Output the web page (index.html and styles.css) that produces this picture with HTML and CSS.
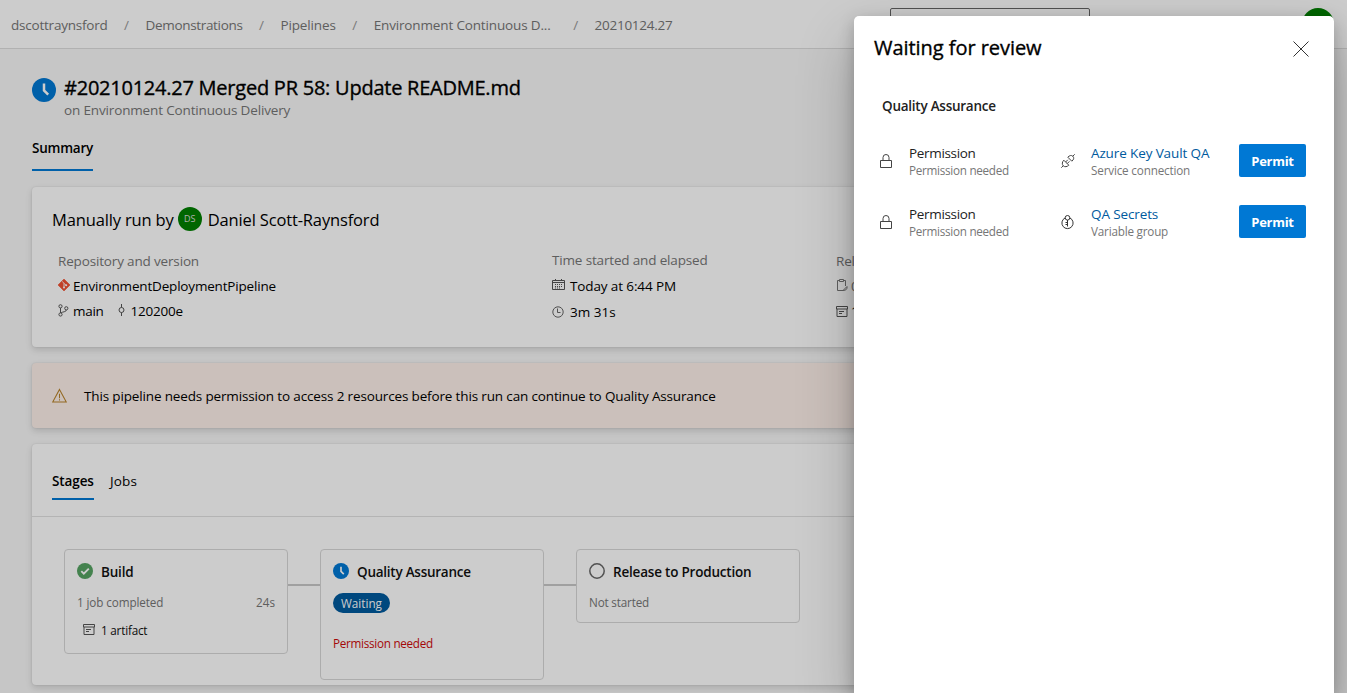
FILE: index.html
```
<!DOCTYPE html>
<html lang="en">
<head>
<meta charset="utf-8">
<title>Waiting for review</title>
<link rel="stylesheet" href="styles.css">
</head>
<body>
<svg width="0" height="0" class="defs">
  <symbol id="archive" viewBox="0 0 12 11"><path d="M.5.5h11v2.500H.5zM1 3v7.500h10V3M3 5.500h5M3 7.500h3" fill="none" stroke="currentColor"/></symbol>
  <symbol id="clock" viewBox="0 0 24 24"><circle cx="12" cy="12" r="12" fill="#0078d4"/><path d="M12 5.500v7l4.200 4.200" fill="none" stroke="#fff" stroke-width="2.500"/></symbol>
  <symbol id="lock" viewBox="0 0 12 15"><path d="M.5 6.500h11v7H.5zM3 6.500V3.500a3 3 0 0 1 6 0v3" fill="none" stroke="currentColor"/></symbol>
</svg>
<div class="page">
  <header class="topbar">
    <nav class="crumbs">
      <span class="c1">dscottraynsford</span><i>/</i><span class="c2">Demonstrations</span><i>/</i><span class="c3">Pipelines</span><i>/</i><span class="c4">Environment Continuous D...</span><i class="last">/</i><span class="c5">20210124.27</span>
    </nav>
    <div class="search"></div>
    <div class="account"></div>
  </header>
  <main class="main">
    <div class="run-head">
      <svg class="run-icon"><use href="#clock"/></svg>
      <div>
        <h1 class="title">#20210124.27 Merged PR 58: Update README.md</h1>
        <p class="subtitle">on Environment Continuous Delivery</p>
      </div>
    </div>
    <div class="tabs"><span class="tab active summary">Summary</span></div>

    <section class="card info">
      <div class="run-by"><span class="by">Manually run by</span><span class="avatar">DS</span><span class="name">Daniel Scott-Raynsford</span></div>
      <div class="facts">
        <div class="fact repo">
          <div class="label rv">Repository and version</div>
          <div class="line"><svg class="git" viewBox="0 0 12 12"><path d="M6 0l6 6-6 6-6-6z" fill="#f05133" stroke="#f05133" stroke-width=".6" stroke-linejoin="round"/><path d="M4.200 2.500L6 4.300v4.400M6.200 4.500L8 6.300" stroke="#fff" fill="none" stroke-width=".9"/><circle cx="6" cy="8.600" r="1" fill="#fff"/><circle cx="8.200" cy="6.300" r="1" fill="#fff"/></svg><span class="edp">EnvironmentDeploymentPipeline</span></div>
          <div class="line"><svg class="branch" viewBox="0 0 11 13"><g fill="none" stroke="#555"><circle cx="2.500" cy="2.300" r="1.600"/><circle cx="2.500" cy="10.500" r="1.600"/><circle cx="8.300" cy="4.300" r="1.600"/><path d="M2.500 4v5M8.300 6c0 2.200-3.800 1.500-5.300 3"/></g></svg><span class="mainb">main</span><svg class="commit" viewBox="0 0 7 12"><g fill="none" stroke="#555"><circle cx="3.500" cy="6" r="2.500"/><path d="M3.500 0v3.500M3.500 8.500V12"/></g></svg><span class="sha">120200e</span></div>
        </div>
        <div class="fact time">
          <div class="label te">Time started and elapsed</div>
          <div class="line"><svg class="cal" viewBox="0 0 13 12"><g fill="none" stroke="#555"><path d="M.5 1.500h12v9H.5zM.5 3.500h12M3.500 0v2M9.500 0v2"/><path d="M3 5.500h8M3 7.500h8M3 9h6" stroke-dasharray="1 1"/></g></svg><span class="today">Today at 6:44 PM</span></div>
          <div class="line"><svg class="watch" viewBox="0 0 12 12"><g fill="none" stroke="#666"><circle cx="6" cy="6" r="5.200"/><path d="M5.500 2.500v4h3"/></g></svg><span class="dur">3m 31s</span></div>
        </div>
        <div class="fact related">
          <div class="label rel">Related</div>
          <div class="line"><svg class="clip" viewBox="0 0 12 12"><g fill="none" stroke="#777"><path d="M7 11.500H1.500v-10h2M7.500 1.500h2V7M3.500.5h4v2h-4zM7 11.500l4-4c.5 2.500-1 4-4 4"/></g></svg><span class="muted">0 work items</span></div>
          <div class="line"><svg class="arch"><use href="#archive"/></svg><span>1 published</span></div>
        </div>
      </div>
    </section>

    <section class="card banner">
      <svg class="warn" viewBox="0 0 16 15"><path d="M8 1L15.200 14.400H.8zM8 5.500v5M8 11.500v1.200" fill="none" stroke="#b8832b" stroke-width="1.100"/></svg>
      <span class="msg">This pipeline needs permission to access 2 resources before this run can continue to Quality Assurance</span>
    </section>

    <section class="card stages">
      <div class="stage-tabs"><span class="tab active st">Stages</span><span class="tab jobs">Jobs</span></div>
      <div class="graph">
        <article class="stage build">
          <h2><svg class="sicon" viewBox="0 0 16 16"><circle cx="8" cy="8" r="8" fill="#55a362"/><path d="M4.300 8.200l2.500 2.500 5-5" fill="none" stroke="#fff" stroke-width="1.900"/></svg><span class="h-build">Build</span></h2>
          <div class="row"><span class="jc">1 job completed</span><span class="secs">24s</span></div>
          <div class="artifact"><svg class="arch"><use href="#archive"/></svg><span class="art">1 artifact</span></div>
        </article>
        <div class="link"></div>
        <article class="stage qa">
          <h2><svg class="sicon"><use href="#clock"/></svg><span class="h-qa">Quality Assurance</span></h2>
          <span class="pill"><span class="wait">Waiting</span></span>
          <div class="needed"><span class="pn">Permission needed</span></div>
        </article>
        <div class="link"></div>
        <article class="stage prod">
          <h2><svg class="sicon" viewBox="0 0 16 16"><circle cx="8" cy="8" r="7.200" fill="none" stroke="#666" stroke-width="1.500"/></svg><span class="h-prod">Release to Production</span></h2>
          <div class="row"><span class="ns">Not started</span></div>
        </article>
      </div>
    </section>
  </main>
</div>
<div class="scrim"></div>
<aside class="panel">
  <div class="panel-head"><h2 class="ptitle">Waiting for review</h2><svg class="close" viewBox="0 0 16 16"><path d="M.5.5l15 15M15.500.5l-15 15" stroke="#333" stroke-width="1"/></svg></div>
  <h3 class="group"><span class="h-qa">Quality Assurance</span></h3>
  <div class="request">
    <svg class="lock"><use href="#lock"/></svg>
    <div class="what"><b class="perm">Permission</b><small class="pn">Permission needed</small></div>
    <svg class="res" viewBox="0 0 14 14"><g fill="none" stroke="#444"><path d="M.3 13.700l1.900-1.900M11.800 2.200L13.700.3M2.800 6.200l5 5c-1.600 1.600-4.100 2.100-5.600.6s-1-4 .6-5.600zM6.800 3.200l4 4c2.100-1.600 2.500-3.600 1-5S8.400 1.600 6.800 3.200zM4.600 8L6.800 5.800M6.200 9.600l2.200-2.200"/></g></svg>
    <div class="target"><a class="akv">Azure Key Vault QA</a><small class="sc">Service connection</small></div>
    <button class="permit"><span>Permit</span></button>
  </div>
  <div class="request">
    <svg class="lock"><use href="#lock"/></svg>
    <div class="what"><b class="perm">Permission</b><small class="pn">Permission needed</small></div>
    <svg class="res" viewBox="0 0 14 14"><g fill="none" stroke="#333"><path d="M4 3a5.600 5.600 0 1 0 5 0"/><circle cx="6.500" cy="2.800" r="2.300"/><path d="M6.500 5v6.500M6.500 7.500H4.500M6.500 9.500H4.500"/></g></svg>
    <div class="target"><a class="qas">QA Secrets</a><small class="vg">Variable group</small></div>
    <button class="permit"><span>Permit</span></button>
  </div>
</aside>
</body>
</html>
```
FILE: styles.css
```
* { box-sizing: border-box; }
body {
  margin: 0;
  position: relative;
  height: 693px;
  overflow: hidden;
  font: 13.5px/20px "Open Sans", "Noto Sans", sans-serif;
  color: #000;
}
h1, h2, h3, p { margin: 0; }
svg { flex: none; display: block; overflow: visible; }
.defs { position: absolute; }
span, a, small, b { white-space: nowrap; }

.page { height: 693px; overflow: hidden; background: #f8f8f8; }
.topbar {
  display: flex;
  align-items: flex-start;
  height: 49px;
  padding: 0 13px 0 11px;
  background: #fff;
  border-bottom: 1px solid #dedede;
}
.crumbs { display: flex; width: 879px; padding-top: 15px; color: #767676; }
.crumbs i { width: 38px; text-align: center; font-style: normal; color: #999; }
.crumbs i.last { width: 44px; padding-left: 6px; }
.search { width: 200px; height: 32px; margin-top: 8px; border: 1px solid #666; border-radius: 2px; }
.account { width: 32px; height: 32px; margin: 8px 0 0 auto; border-radius: 50%; background: #008000; }

/* tracking */
.c1 { letter-spacing: -.22px; }
.c2 { letter-spacing: -.33px; }
.c3, .c4, .subtitle { letter-spacing: -.15px; }
.c5 { letter-spacing: -.27px; }
.rv, .te, .rel { letter-spacing: -.16px; }
.edp { letter-spacing: -.18px; }
.mainb { letter-spacing: -.3px; }
.sha { letter-spacing: -.2px; }
.today { letter-spacing: -.12px; }
.msg { letter-spacing: -.147px; }
.h-build, .h-prod { letter-spacing: -.2px; }
.h-qa { letter-spacing: -.25px; }
.jc { letter-spacing: -.1px; }
.pn { letter-spacing: -.28px; }
.ns, .sc { letter-spacing: -.17px; }
.art, .vg { letter-spacing: -.2px; }
.perm { letter-spacing: -.33px; }
.akv, .qas { letter-spacing: -.12px; }

.main { padding: 26px 32px 0; }
.run-head { display: flex; gap: 8px; height: 63px; }
.run-icon { width: 24px; height: 24px; margin-top: 3px; }
.title { font-size: 20px; line-height: 26px; font-weight: 500; letter-spacing: -.24px; -webkit-text-stroke: .35px #000; }
.subtitle { line-height: 18px; color: #767676; }
.tab { display: inline-block; border-bottom: 2px solid transparent; }
.tab.active { font-weight: 600; border-color: #0078d4; }
.summary { height: 33px; letter-spacing: -.24px; }
.tabs { height: 49px; }

.card {
  width: 1283px;
  margin-bottom: 16px;
  background: #fff;
  border-radius: 4px;
  box-shadow: 0 3px 7px rgba(0,0,0,.14), 0 0 2px rgba(0,0,0,.12);
}
.info { height: 160px; padding: 20px 20px 0; }
.run-by { display: flex; align-items: center; height: 24px; font-size: 16.5px; letter-spacing: -.15px; }
.by, .name { padding-top: 2px; }
.avatar { width: 24px; height: 24px; margin: 0 6px 0 4px; border-radius: 50%; background: #008000; color: #ddd; font-size: 9px; line-height: 24px; text-align: center; }
.facts { display: flex; padding: 20px 0 0 6px; }
.repo { width: 494px; }
.time { width: 284px; margin-top: -1px; }
.label { height: 25px; color: #767676; }
.line { display: flex; height: 25px; }
.git { width: 12px; height: 12px; margin: 3px 3px 0 0; }
.branch { width: 11px; height: 13px; margin: 3px 4px 0 0; }
.commit { width: 7px; height: 12px; margin: 3px 6px 0 14px; }
.time .line { height: 26px; padding-top: 1px; }
.cal { width: 13px; height: 12px; margin: 3px 5px 0 0; }
.watch { width: 12px; height: 12px; margin: 4px 6px 0 0; }
.clip { width: 12px; height: 12px; margin: 3px 3px 0 0; }
.arch { width: 12px; height: 11px; margin: 5px 3px 0 0; color: #555; }
.muted { color: #767676; }

.banner { display: flex; height: 65px; padding: 23px 20px 0; background: #fef1ea; }
.warn { width: 15px; height: 15px; margin: 2px 17px 0 0; }

.stages { height: 241px; }
.stage-tabs { display: flex; gap: 16px; height: 73px; padding: 27px 20px 0; border-bottom: 1px solid #e2e2e2; }
.stage-tabs .tab { height: 29px; }
.st { width: 42px; letter-spacing: -.1px; }
.jobs { letter-spacing: .15px; }
.graph { display: flex; align-items: flex-start; padding: 32px 32px 0; }
.stage { width: 224px; padding: 12px; border: 1px solid #d8d8d8; border-radius: 4px; font-size: 11.7px; line-height: 16px; color: #767676; }
.build { height: 105px; }
.qa { height: 131px; }
.prod { height: 74px; }
.stage h2 { display: flex; height: 20px; font-size: 13.5px; line-height: 20px; font-weight: 600; color: #111; }
.sicon { width: 16px; height: 16px; margin: 1px 8px 0 0; }
.link { width: 32px; height: 2px; margin-top: 35px; background: #c8c8c8; }
.row { display: flex; justify-content: space-between; margin-top: 12px; }
.artifact { display: flex; margin: 12px 0 0 6px; color: #111; }
.artifact .arch { margin: 2px 6px 0 0; }
.pill { display: flex; width: 57px; height: 20px; margin-top: 11px; justify-content: center; align-items: center; border-radius: 10px; background: #005a9e; color: #fff; }
.needed { margin-top: 22px; color: #cd0a0a; }

.scrim { position: absolute; inset: 0; background: rgba(0,0,0,.2); }
.panel {
  position: absolute;
  top: 16px;
  left: 854px;
  width: 480px;
  height: 677px;
  background: #fff;
  border-radius: 5px 5px 0 0;
  box-shadow: 0 26px 58px rgba(0,0,0,.24), 0 5px 16px rgba(0,0,0,.22);
}
.panel-head { display: flex; justify-content: space-between; padding: 18px 25px 0 20px; height: 80px; }
.ptitle { font-size: 20px; line-height: 28px; font-weight: 500; letter-spacing: -.05px; -webkit-text-stroke: .35px #000; }
.close { width: 16px; height: 16px; margin-top: 7px; }
.group { height: 34px; padding-left: 28px; font-size: 13.5px; line-height: 20px; font-weight: 600; color: #222; }
.request { display: flex; height: 61px; padding: 0 28px 0 26px; align-items: center; }
.lock { width: 12px; height: 15px; color: #444; margin: 1px 17px 0 0; }
.what { width: 152px; }
.res { width: 14px; height: 14px; margin-right: 16px; }
.target { width: 148px; }
.what b, .target a { display: block; height: 19px; line-height: 21px; font-weight: 400; color: #222; }
.target a { color: #005a9e; }
.request small { display: block; font-size: 11.7px; line-height: 17px; color: #767676; }
.permit { width: 67px; height: 33px; padding: 0; border: 0; border-radius: 2px; background: #0078d4; color: #fff; font: 700 13px "Open Sans", sans-serif; letter-spacing: -.3px; }
```
